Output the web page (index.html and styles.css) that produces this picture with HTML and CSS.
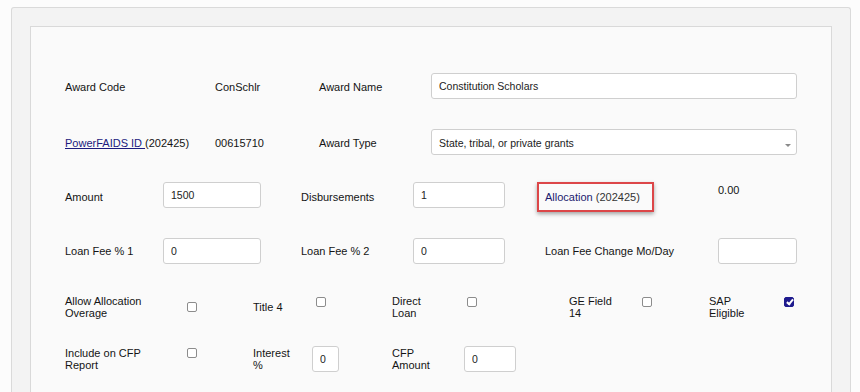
FILE: index.html
```html
<!DOCTYPE html>
<html lang="en">
<head>
  <meta charset="UTF-8">
  <title>Award Detail</title>
  <link rel="stylesheet" href="styles.css">
</head>
<body>

<div class="outer">
  <div class="panel">

    <div class="row row-1">
      <div class="cell w150">Award Code</div>
      <div class="cell w104">ConSchlr</div>
      <div class="cell w112">Award Name</div>
      <div class="cell"><input class="text wide" type="text" value="Constitution Scholars"></div>
    </div>

    <div class="row row-2">
      <div class="cell w150"><span><a href="#" class="link">PowerFAIDS ID </a>(202425)</span></div>
      <div class="cell w104">00615710</div>
      <div class="cell w112">Award Type</div>
      <div class="cell">
        <div class="select-wrap">
          <select class="text wide">
            <option>State, tribal, or private grants</option>
          </select>
        </div>
      </div>
    </div>

    <div class="row row-3">
      <div class="cell w98">Amount</div>
      <div class="cell w138 top"><input class="text w98" type="text" value="1500"></div>
      <div class="cell w112">Disbursements</div>
      <div class="cell w124 top"><input class="text w92" type="text" value="1"></div>
      <div class="cell w181">
        <div class="alloc"><span class="alloc-name">Allocation</span> (202425)</div>
      </div>
      <div class="cell top value">0.00</div>
    </div>

    <div class="row row-4">
      <div class="cell w98">Loan Fee % 1</div>
      <div class="cell w138"><input class="text w98" type="text" value="0"></div>
      <div class="cell w112">Loan Fee % 2</div>
      <div class="cell w132"><input class="text w92" type="text" value="0"></div>
      <div class="cell w173">Loan Fee Change Mo/Day</div>
      <div class="cell"><input class="text w79" type="text" value=""></div>
    </div>

    <div class="row row-5">
      <div class="cell w122">Allow Allocation<br>Overage</div>
      <div class="cell w66"><input class="check" type="checkbox"></div>
      <div class="cell w63">Title 4</div>
      <div class="cell w76 top"><input class="check" type="checkbox"></div>
      <div class="cell w75">Direct<br>Loan</div>
      <div class="cell w102 top"><input class="check" type="checkbox"></div>
      <div class="cell w73">GE Field<br>14</div>
      <div class="cell w67 top"><input class="check" type="checkbox"></div>
      <div class="cell w75">SAP<br>Eligible</div>
      <div class="cell top"><input class="check" type="checkbox" checked></div>
    </div>

    <div class="row row-6">
      <div class="cell w122">Include on CFP<br>Report</div>
      <div class="cell w66 top"><input class="check" type="checkbox"></div>
      <div class="cell w59">Interest<br>%</div>
      <div class="cell w80"><input class="text w27" type="text" value="0"></div>
      <div class="cell w72">CFP<br>Amount</div>
      <div class="cell"><input class="text w52" type="text" value="0"></div>
    </div>

  </div>
</div>

</body>
</html>
```

FILE: styles.css
```css
* { margin: 0; padding: 0; box-sizing: border-box; }
body {
  font-family: "Liberation Sans", Arial, sans-serif;
  font-size: 11px;
  line-height: 12px;
  color: #141414;
  background: #fcfcfc;
  padding: 7px 9px 0 11px;
  height: 392px;
  overflow: hidden;
}
.outer {
  background: #f3f3f3;
  border: 1px solid #dadada;
  border-bottom: none;
  border-radius: 3px 3px 0 0;
  padding: 18px 18px 0 18px;
  height: 385px;
}
.panel {
  background: #fafafa;
  border: 1px solid #d9d9d9;
  border-bottom: none;
  padding: 46px 34px 0 34px;
  height: 366px;
}
.row {
  display: flex;
  align-items: center;
  height: 26px;
}
.row-2 { margin-top: 30px; }
.row-3 { margin-top: 27px; height: 30px; }
.row-4 { margin-top: 26px; }
.row-5 { margin-top: 31px; height: 24px; }
.row-6 { margin-top: 27px; }
.cell {
  flex: none;
  display: flex;
  align-items: center;
  height: 100%;
}
.cell.top { align-items: flex-start; }
.row-5 .cell.top { padding-top: 2px; }
.row-6 .cell.top { padding-top: 2px; }
.row-1 .cell, .row-2 .cell { padding-top: 2px; }
.value { padding-top: 2px; }

.w27 { width: 27px; }
.w52 { width: 52px; }
.w59 { width: 59px; }
.w63 { width: 63px; }
.w66 { width: 66px; }
.w67 { width: 67px; }
.w72 { width: 72px; }
.w73 { width: 73px; }
.w75 { width: 75px; }
.w76 { width: 76px; }
.w79 { width: 79px; }
.w80 { width: 80px; }
.w92 { width: 92px; }
.w98 { width: 98px; }
.w102 { width: 102px; }
.w104 { width: 104px; }
.w112 { width: 112px; }
.w122 { width: 122px; }
.w124 { width: 124px; }
.w132 { width: 132px; }
.w138 { width: 138px; }
.w150 { width: 150px; }
.w173 { width: 173px; }
.w181 { width: 181px; }

.link {
  color: #1c1a7e;
  text-decoration: underline;
}
.text {
  font-family: "Liberation Sans", Arial, sans-serif;
  font-size: 10.5px;
  color: #222;
  height: 26px;
  background: #fff;
  border: 1px solid #cfcfcf;
  border-radius: 3px;
  padding: 0 7px;
  outline: none;
}
.row-1 .text, .row-2 .text { margin-top: -2px; }
.text.wide { width: 366px; }
.select-wrap {
  position: relative;
  display: flex;
}
.select-wrap select {
  appearance: none;
  -webkit-appearance: none;
  padding-top: 2px;
}
.select-wrap::after {
  content: "";
  position: absolute;
  right: 6px;
  top: 13px;
  border-left: 3px solid transparent;
  border-right: 3px solid transparent;
  border-top: 3px solid #8a8a8a;
}
.alloc {
  height: 30px;
  width: 117px;
  border: 2.5px solid #dc4648;
  box-shadow: 0 2px 4px rgba(0,0,0,0.35);
  padding: 0 0 0 6px;
  display: flex;
  align-items: center;
  white-space: pre;
  color: #333;
}
.alloc-name { color: #1c1a6e; }
.check {
  appearance: none;
  -webkit-appearance: none;
  width: 10px;
  height: 10px;
  border: 1px solid #8c8c8c;
  border-radius: 2px;
  background: #fff;
  position: relative;
}
.check:checked {
  background: #1f1b8e;
  border-color: #1f1b8e;
}
.check:checked::after {
  content: "";
  position: absolute;
  left: 3px;
  top: 0px;
  width: 2px;
  height: 5px;
  border: solid #fff;
  border-width: 0 2px 2px 0;
  transform: rotate(40deg);
}
```
